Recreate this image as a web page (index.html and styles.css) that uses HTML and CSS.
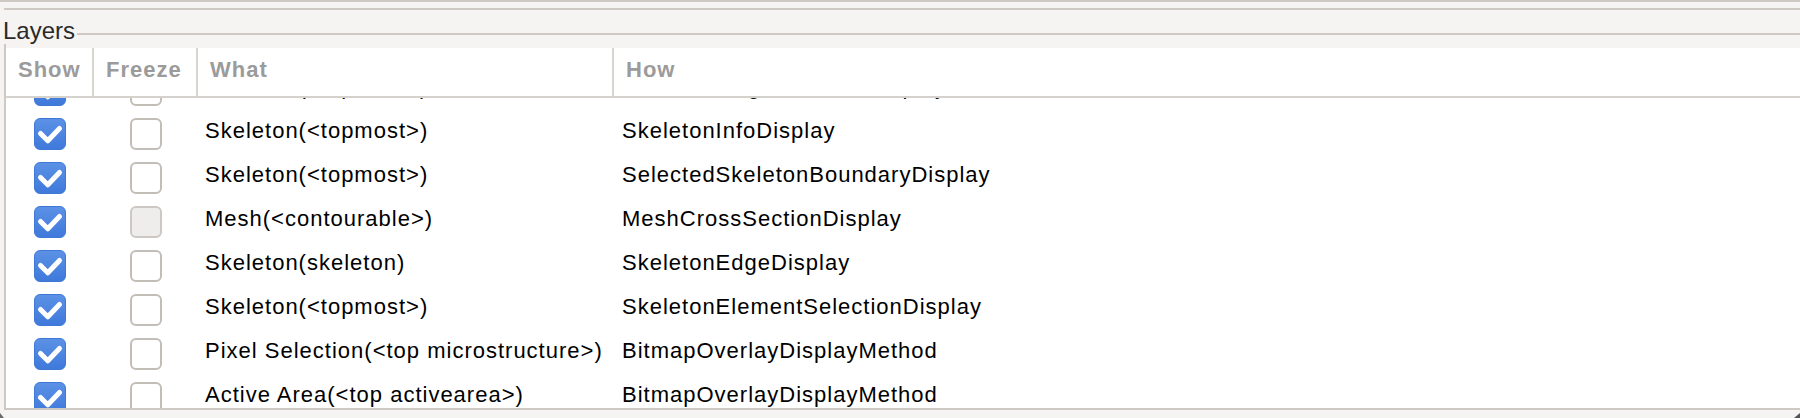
FILE: index.html
```html
<!DOCTYPE html>
<html>
<head>
<meta charset="utf-8">
<link rel="stylesheet" href="styles.css">
</head>
<body>
<div class="rule rule-top"></div>
<div class="rule rule-second"></div>
<div class="title-row">
  <span class="legend">Layers</span>
  <div class="title-line"></div>
</div>
<div class="frame">
  <div class="table">
    <div class="thead">
      <div class="th">Show</div>
      <div class="th sep">Freeze</div>
      <div class="th sep">What</div>
      <div class="th sep">How</div>
    </div>
    <div class="tbody">
      <div class="rows">
        <div class="row">
          <div class="cell cb-cell"><span class="cb on"><svg viewBox="0 0 30 30"><path d="M5.5 14.5 L12.8 21.8 L24.5 9.5"/></svg></span></div>
          <div class="cell cb-cell"><span class="cb"></span></div>
          <div class="cell txt">Skeleton(&lt;topmost&gt;)</div>
          <div class="cell txt how">SkeletonIllegalElementDisplay</div>
        </div>
        <div class="row">
          <div class="cell cb-cell"><span class="cb on"><svg viewBox="0 0 30 30"><path d="M5.5 14.5 L12.8 21.8 L24.5 9.5"/></svg></span></div>
          <div class="cell cb-cell"><span class="cb"></span></div>
          <div class="cell txt">Skeleton(&lt;topmost&gt;)</div>
          <div class="cell txt how">SkeletonInfoDisplay</div>
        </div>
        <div class="row">
          <div class="cell cb-cell"><span class="cb on"><svg viewBox="0 0 30 30"><path d="M5.5 14.5 L12.8 21.8 L24.5 9.5"/></svg></span></div>
          <div class="cell cb-cell"><span class="cb"></span></div>
          <div class="cell txt">Skeleton(&lt;topmost&gt;)</div>
          <div class="cell txt how">SelectedSkeletonBoundaryDisplay</div>
        </div>
        <div class="row">
          <div class="cell cb-cell"><span class="cb on"><svg viewBox="0 0 30 30"><path d="M5.5 14.5 L12.8 21.8 L24.5 9.5"/></svg></span></div>
          <div class="cell cb-cell"><span class="cb disabled"></span></div>
          <div class="cell txt">Mesh(&lt;contourable&gt;)</div>
          <div class="cell txt how">MeshCrossSectionDisplay</div>
        </div>
        <div class="row">
          <div class="cell cb-cell"><span class="cb on"><svg viewBox="0 0 30 30"><path d="M5.5 14.5 L12.8 21.8 L24.5 9.5"/></svg></span></div>
          <div class="cell cb-cell"><span class="cb"></span></div>
          <div class="cell txt">Skeleton(skeleton)</div>
          <div class="cell txt how">SkeletonEdgeDisplay</div>
        </div>
        <div class="row">
          <div class="cell cb-cell"><span class="cb on"><svg viewBox="0 0 30 30"><path d="M5.5 14.5 L12.8 21.8 L24.5 9.5"/></svg></span></div>
          <div class="cell cb-cell"><span class="cb"></span></div>
          <div class="cell txt">Skeleton(&lt;topmost&gt;)</div>
          <div class="cell txt how">SkeletonElementSelectionDisplay</div>
        </div>
        <div class="row">
          <div class="cell cb-cell"><span class="cb on"><svg viewBox="0 0 30 30"><path d="M5.5 14.5 L12.8 21.8 L24.5 9.5"/></svg></span></div>
          <div class="cell cb-cell"><span class="cb"></span></div>
          <div class="cell txt">Pixel Selection(&lt;top microstructure&gt;)</div>
          <div class="cell txt how">BitmapOverlayDisplayMethod</div>
        </div>
        <div class="row">
          <div class="cell cb-cell"><span class="cb on"><svg viewBox="0 0 30 30"><path d="M5.5 14.5 L12.8 21.8 L24.5 9.5"/></svg></span></div>
          <div class="cell cb-cell"><span class="cb"></span></div>
          <div class="cell txt">Active Area(&lt;top activearea&gt;)</div>
          <div class="cell txt how">BitmapOverlayDisplayMethod</div>
        </div>
      </div>
    </div>
  </div>
</div>
<div class="grip grip-left"></div>
<div class="grip grip-right"></div>
</body>
</html>
```
FILE: styles.css
```css
html, body {
  margin: 0;
  padding: 0;
}
body {
  width: 1800px;
  height: 418px;
  overflow: hidden;
  background: #f5f4f2;
  font-family: "Liberation Sans", Arial, sans-serif;
  font-size: 22px;
  letter-spacing: 1px;
  color: #000;
  position: relative;
}
.rule {
  height: 2px;
  background: #cfc9c4;
}
.rule-second {
  margin-top: 6px;
  margin-left: 4px;
}
.title-row {
  display: flex;
  align-items: flex-start;
  height: 34px;
}
.legend {
  margin-top: 7px;
  padding-left: 3px;
  font-size: 24px;
  letter-spacing: 0;
  line-height: 28px;
  color: #2a2a2a;
  white-space: nowrap;
}
.title-line {
  flex: 1;
  height: 2px;
  margin-top: 23px;
  margin-left: 2px;
  background: #cfc9c4;
}
.frame {
  margin-left: 4px;
  border-left: 2px solid #cfc9c4;
  border-bottom: 2px solid #cfc9c4;
  padding-top: 4px;
}
.table {
  background: #fff;
}
.thead {
  display: grid;
  grid-template-columns: 86px 104px 416px 1fr;
  height: 48px;
  border-bottom: 2px solid #d5d1cc;
}
.th {
  padding-left: 12px;
  font-weight: bold;
  color: #9b9b9b;
  line-height: 44px;
  height: 48px;
  white-space: nowrap;
}
.th.sep {
  border-left: 2px solid #d8d4cf;
}
.tbody {
  height: 310px;
  overflow: hidden;
}
.rows {
  margin-top: -30px;
}
.row {
  display: grid;
  grid-template-columns: 86px 104px 416px 1fr;
  height: 44px;
}
.cell {
  height: 44px;
  box-sizing: border-box;
}
.cb-cell {
  display: flex;
  align-items: center;
  justify-content: center;
}
.row .cb-cell:first-child {
  padding-left: 2px;
}
.row .cb-cell:nth-child(2) {
  padding-left: 4px;
}
.txt {
  padding-left: 9px;
  line-height: 37px;
  padding-bottom: 7px;
  white-space: nowrap;
}
.txt.how {
  padding-left: 10px;
}
.cb {
  width: 32px;
  height: 32px;
  box-sizing: border-box;
  border-radius: 6px;
  border: 2px solid #c3bdb8;
  background: #fff;
  display: block;
}
.cb.disabled {
  background: #efedeb;
  border-color: #cdc8c3;
}
.cb.on {
  border: 1px solid #3f78d6;
  background: linear-gradient(#5b92e6, #3f79da);
}
.cb svg {
  width: 30px;
  height: 30px;
  display: block;
}
.cb svg path {
  fill: none;
  stroke: #fff;
  stroke-width: 5;
  stroke-linecap: round;
  stroke-linejoin: round;
}
.grip {
  position: absolute;
  bottom: 0;
  width: 0;
  height: 0;
}
.grip-left {
  left: 0;
  border-top: 5px solid transparent;
  border-left: 4px solid #6a6a6a;
}
.grip-right {
  right: 0;
  border-bottom: 5px solid #555;
  border-left: 6px solid transparent;
}
```
